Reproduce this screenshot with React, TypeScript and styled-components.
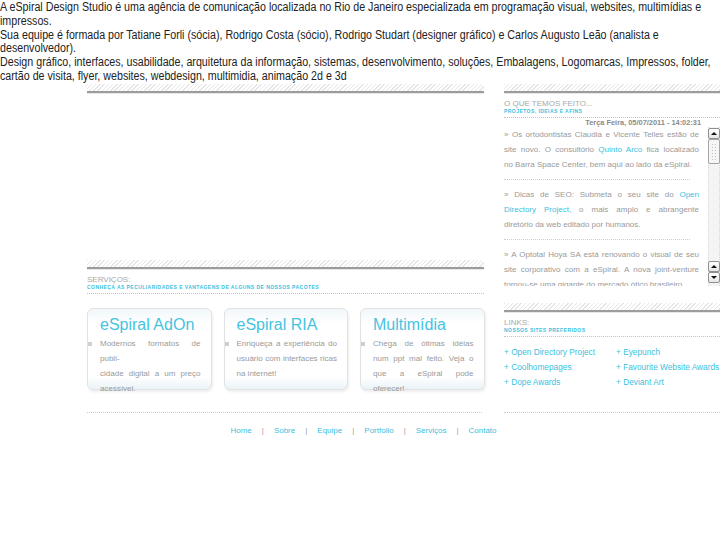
import styled, { createGlobalStyle } from "styled-components";

const cyan = "#3bbfe0";

const GlobalStyle = createGlobalStyle`
  html, body {
    margin: 0;
    padding: 0;
    background: #fff;
  }
  body {
    font-family: "Liberation Sans", Arial, sans-serif;
    overflow-x: hidden;
  }
  a {
    color: ${cyan};
    text-decoration: none;
  }
`;

// no narrow face installed, so the intro is squeezed horizontally
const Intro = styled.div`
  width: 816px;
  transform: scaleX(0.89);
  transform-origin: 0 0;
  font-family: "Liberation Sans Narrow", "Arial Narrow", "Liberation Sans", sans-serif;
  font-size: 12px;
  line-height: 13.8px;
  color: #222;
  padding-top: 1px;
`;

const Main = styled.div`
  display: grid;
  grid-template-columns: 397px 216px;
  column-gap: 20px;
  padding-left: 87px;
`;

const Column = styled.div`
  display: flex;
  flex-direction: column;
`;

// hatched strip with the grey rule under it
const Bar = styled.div<{ $top?: number }>`
  height: 7px;
  margin-top: ${(p) => p.$top || 0}px;
  background: repeating-linear-gradient(135deg, #e6e6e6 0 1px, #fff 1px 3px);
  border-bottom: 2px solid #9c9c9c;
  box-shadow: 0 1px 0 #e8e8e8;
`;

const Blank = styled.div`
  height: 167px;
`;

const Head = styled.div`
  padding: 6px 0 3px;
  border-bottom: 1px dotted #c4c4c4;
`;

const HeadTitle = styled.div`
  font-size: 8px;
  line-height: 10px;
  color: #a8a8a8;
  text-transform: uppercase;
`;

const HeadSub = styled.div`
  font-size: 5px;
  line-height: 6px;
  margin-top: -1px;
  font-weight: bold;
  letter-spacing: 0.45px;
  color: ${cyan};
  text-transform: uppercase;
`;

const Cards = styled.div`
  display: flex;
  gap: 12px;
  margin-top: 14px;
`;

const Card = styled.div`
  box-sizing: border-box;
  width: 125px;
  height: 82px;
  padding: 6px 10px 0 12px;
  border: 1px solid #e2e2e2;
  border-radius: 6px;
  background: linear-gradient(#f1f7fa 0, #fff 14px, #fff 68px, #eaf3f7 100%);
  box-shadow: 1px 2px 3px rgba(0, 0, 0, 0.07);
`;

const CardTitle = styled.div`
  font-size: 16px;
  line-height: 20px;
  color: #45c3df;
  white-space: nowrap;
`;

const CardText = styled.p`
  position: relative;
  width: 100.5px;
  margin: 1px 0 0;
  font-size: 8px;
  line-height: 15px;
  color: #9a9a9a;
  text-align: justify;

  &::before {
    content: "";
    position: absolute;
    left: -12px;
    top: 6px;
    width: 4px;
    height: 4px;
    background: #cfcfcf;
  }
`;

const DateLine = styled.div`
  margin-top: 1px;
  padding-right: 19px;
  font-size: 7.4px;
  line-height: 8px;
  font-weight: bold;
  color: #8a8a8a;
  text-align: right;
`;

const NewsRow = styled.div`
  display: flex;
  gap: 9px;
  height: 159px;
`;

const NewsText = styled.div`
  width: 195px;
  overflow: hidden;
  font-size: 8px;
  line-height: 15px;
  color: #9a9a9a;
`;

const NewsItem = styled.p<{ $first?: boolean }>`
  margin: 0;
  padding: ${(p) => (p.$first ? 0 : 7)}px 0 7px;
  text-align: justify;
`;

const Sep = styled.div`
  width: 186px;
  border-bottom: 1px dotted #cfcfcf;
`;

const Scroll = styled.div`
  box-sizing: border-box;
  width: 12px;
  display: flex;
  flex-direction: column;
  padding: 1px 0 3px;
  background: #f4f4f4;
  border-left: 1px dotted #d6d6d6;
  border-right: 1px dotted #d6d6d6;
`;

const ScrollBtn = styled.div<{ $down?: boolean }>`
  box-sizing: border-box;
  width: 12px;
  height: 11px;
  margin: 0 -1px;
  border: 1px solid #8f8f8f;
  border-radius: 2px;
  background: linear-gradient(#fff, #e6e6e6);
  display: flex;
  align-items: center;
  justify-content: center;

  &::before {
    content: "";
    border-left: 3px solid transparent;
    border-right: 3px solid transparent;
    ${(p) => (p.$down ? "border-top: 3px solid #111;" : "border-bottom: 3px solid #111;")}
  }
`;

const Thumb = styled.div`
  box-sizing: border-box;
  width: 12px;
  height: 25px;
  margin: 0 -1px;
  border: 1px solid #a5a5a5;
  border-radius: 2px;
  padding: 3px 2px;
  background: radial-gradient(circle, #c2c2c2 0.7px, transparent 0.9px) 0 0 / 3px 3px content-box,
    #f6f6f6;
`;

const Fill = styled.div`
  flex: 1;
`;

const Links = styled.div`
  display: grid;
  grid-template-columns: 112px 1fr;
  margin-top: 8px;
  font-size: 8.3px;
  line-height: 15px;
  white-space: nowrap;
`;

const Bottom = styled.div`
  display: grid;
  grid-template-columns: 395px 216px;
  column-gap: 22px;
  padding-left: 87px;
  margin-top: 22px;
`;

const Dots = styled.div`
  border-top: 1px dotted #cdcdcd;
`;

const Nav = styled.div`
  margin-top: 12px;
  text-align: center;
  font-size: 8px;
  line-height: 12px;
`;

const Pipe = styled.span`
  color: #a0a0a0;
  margin: 0 10px;
`;

const services = [
  {
    title: "eSpiral AdOn",
    text: (
      <>
        Modernos formatos de publi-
        <br />
        cidade digital a um preço acessível.
      </>
    ),
  },
  { title: "eSpiral RIA", text: "Enriqueça a experiência do usuário com interfaces ricas na internet!" },
  { title: "Multimídia", text: "Chega de ótimas idéias num ppt mal feito. Veja o que a eSpiral pode oferecer!" },
];

const links = [
  "Open Directory Project",
  "Eyepunch",
  "Coolhomepages",
  "Favourite Website Awards",
  "Dope Awards",
  "Deviant Art",
];

const menu = ["Home", "Sobre", "Equipe", "Portfolio", "Serviços", "Contato"];

export default function App() {
  return (
    <>
      <GlobalStyle />
      <Intro>
        <div>
          A eSpiral Design Studio é uma agência de comunicação localizada no Rio de Janeiro especializada em
          programação visual, websites, multimídias e impressos.
        </div>
        <div>
          Sua equipe é formada por Tatiane Forli (sócia), Rodrigo Costa (sócio), Rodrigo Studart (designer gráfico) e
          Carlos Augusto Leão (analista e desenvolvedor).
        </div>
        <div>
          Design gráfico, interfaces, usabilidade, arquitetura da informação, sistemas, desenvolvimento, soluções,
          Embalagens, Logomarcas, Impressos, folder, cartão de visita, flyer, websites, webdesign, multimidia, animação
          2d e 3d
        </div>
      </Intro>

      <Main>
        <Column>
          <Bar />
          <Blank />
          <Bar />
          <Head>
            <HeadTitle>Serviços:</HeadTitle>
            <HeadSub>Conheça as peculiaridades e vantagens de alguns de nossos pacotes</HeadSub>
          </Head>
          <Cards>
            {services.map((s) => (
              <Card key={s.title}>
                <CardTitle>{s.title}</CardTitle>
                <CardText>{s.text}</CardText>
              </Card>
            ))}
          </Cards>
        </Column>

        <Column>
          <Bar />
          <Head>
            <HeadTitle>O que temos feito...</HeadTitle>
            <HeadSub>Projetos, ideias e afins</HeadSub>
          </Head>
          <DateLine>Terça Feira, 05/07/2011 - 14:02:31</DateLine>
          <NewsRow>
            <NewsText>
              <NewsItem $first>
                » Os ortodontistas Claudia e Vicente Telles estão de site novo. O consultório{" "}
                <a href="#">Quinto Arco</a> fica localizado no&nbsp;Barra Space Center, bem aqui ao lado da eSpiral.
              </NewsItem>
              <Sep />
              <NewsItem>
                » Dicas de SEO: Submeta o seu site do <a href="#">Open Directory Project</a>, o mais amplo e
                abrangente diretório&nbsp;da web editado por humanos.
              </NewsItem>
              <Sep />
              <NewsItem>
                » A Optotal Hoya SA está renovando o visual de seu site corporativo com a eSpiral. A nova joint-venture
                tornou-se uma gigante do mercado ótico brasileiro.
              </NewsItem>
            </NewsText>
            <Scroll>
              <ScrollBtn />
              <Thumb />
              <Fill />
              <ScrollBtn />
              <ScrollBtn $down />
            </Scroll>
          </NewsRow>
          <Bar $top={17} />
          <Head>
            <HeadTitle>Links:</HeadTitle>
            <HeadSub>Nossos sites preferidos</HeadSub>
          </Head>
          <Links>
            {links.map((l) => (
              <a key={l} href="#">
                + {l}
              </a>
            ))}
          </Links>
        </Column>
      </Main>

      <Bottom>
        <Dots />
        <Dots />
      </Bottom>

      <Nav>
        {menu.map((m, i) => (
          <span key={m}>
            {i > 0 && <Pipe>|</Pipe>}
            <a href="#">{m}</a>
          </span>
        ))}
      </Nav>
    </>
  );
}
